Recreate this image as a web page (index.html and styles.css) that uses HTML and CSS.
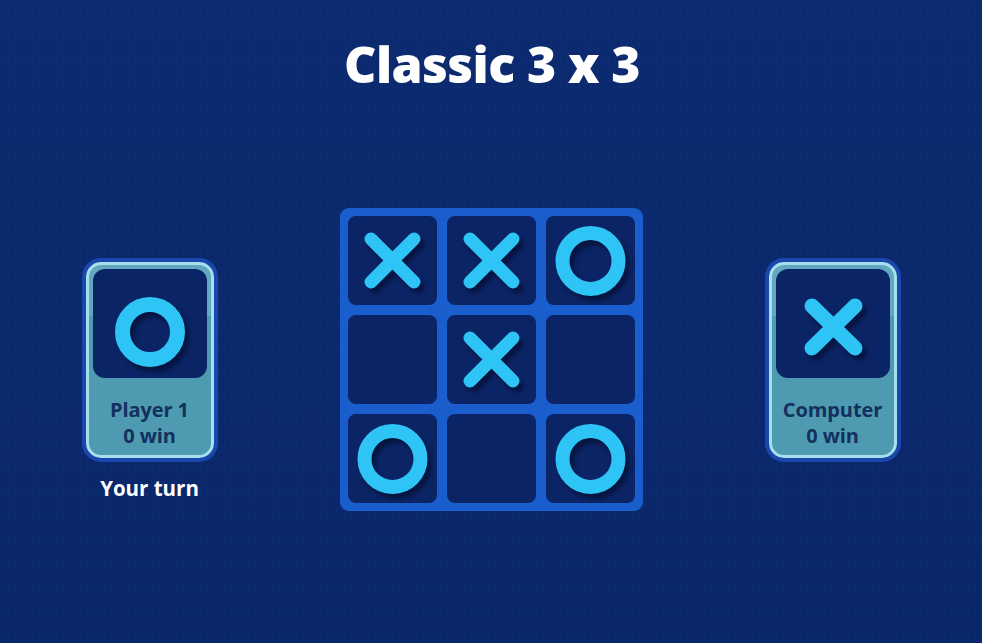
FILE: index.html
```html
<!DOCTYPE html>
<html lang="en">
<head>
<meta charset="utf-8">
<title>Classic 3 x 3</title>
<link rel="stylesheet" href="styles.css">
</head>
<body>
<main class="screen">
  <h1 class="title">Classic 3 x 3</h1>
  <div class="arena">
    <div class="player">
      <div class="card">
        <div class="token">
          <svg class="mark" width="115" height="109" viewBox="0 0 115 109"><circle cx="57" cy="63" r="27.5" fill="none" stroke="#2ec5f6" stroke-width="15"/></svg>
        </div>
        <div class="name">Player 1<br>0 win</div>
      </div>
      <div class="turn">Your turn</div>
    </div>

    <div class="board">
      <div class="cell"><svg class="mark" width="89" height="89" viewBox="0 0 89 89"><path d="M23 23 L66 66 M66 23 L23 66" stroke="#2ec5f6" stroke-width="13" stroke-linecap="round" fill="none"/></svg></div>
      <div class="cell"><svg class="mark" width="89" height="89" viewBox="0 0 89 89"><path d="M23 23 L66 66 M66 23 L23 66" stroke="#2ec5f6" stroke-width="13" stroke-linecap="round" fill="none"/></svg></div>
      <div class="cell"><svg class="mark" width="89" height="89" viewBox="0 0 89 89"><circle cx="44.5" cy="45" r="28" fill="none" stroke="#2ec5f6" stroke-width="14"/></svg></div>
      <div class="cell"></div>
      <div class="cell"><svg class="mark" width="89" height="89" viewBox="0 0 89 89"><path d="M23 23 L66 66 M66 23 L23 66" stroke="#2ec5f6" stroke-width="13" stroke-linecap="round" fill="none"/></svg></div>
      <div class="cell"></div>
      <div class="cell"><svg class="mark" width="89" height="89" viewBox="0 0 89 89"><circle cx="44.5" cy="45" r="28" fill="none" stroke="#2ec5f6" stroke-width="14"/></svg></div>
      <div class="cell"></div>
      <div class="cell"><svg class="mark" width="89" height="89" viewBox="0 0 89 89"><circle cx="44.5" cy="45" r="28" fill="none" stroke="#2ec5f6" stroke-width="14"/></svg></div>
    </div>

    <div class="player">
      <div class="card">
        <div class="token">
          <svg class="mark" width="115" height="109" viewBox="0 0 115 109"><path d="M36 37 L79 79 M79 37 L36 79" stroke="#2ec5f6" stroke-width="15" stroke-linecap="round" fill="none"/></svg>
        </div>
        <div class="name">Computer<br>0 win</div>
      </div>
    </div>
  </div>
</main>
</body>
</html>
```

FILE: styles.css
```css
* { box-sizing: border-box; }

html, body {
  margin: 0;
  padding: 0;
}

body {
  width: 982px;
  height: 643px;
  overflow: hidden;
  font-family: "Open Sans", "Noto Sans", sans-serif;
  background-color: #0b286c;
}

.screen {
  width: 982px;
  height: 643px;
  padding-top: 34px;
  background-color: #0b286c;
  background-image:
    radial-gradient(circle, rgba(40, 80, 170, 0.08) 1px, transparent 1.5px),
    linear-gradient(180deg, #0c2a6f 0%, #0a276a 100%);
  background-size: 6px 6px, 100% 100%;
}

.title {
  margin: 0;
  text-align: center;
  color: #ffffff;
  font-size: 50px;
  line-height: 60px;
  font-weight: 800;
  letter-spacing: -0.6px;
  padding-left: 2px;
}

.arena {
  margin-top: 114px;
  display: flex;
  justify-content: center;
  align-items: flex-start;
  gap: 122px;
}

.player {
  width: 136px;
  margin-top: 54px;
  display: flex;
  flex-direction: column;
  align-items: center;
}

.card {
  width: 128px;
  height: 196px;
  border: 3px solid #a6dfee;
  border-radius: 15px;
  box-shadow: 0 0 0 4px #1a47ad;
  padding: 4px 4px 0;
  background: linear-gradient(180deg, #62a9bf 0%, #62a9bf 27%, #4e9ab0 27%, #4e9ab0 100%);
  display: flex;
  flex-direction: column;
  align-items: center;
}

.token {
  width: 114px;
  height: 109px;
  border-radius: 12px;
  background: #0b2465;
  flex: none;
  overflow: hidden;
}

.name {
  margin-top: 19px;
  text-align: center;
  color: #13305f;
  font-weight: 700;
  font-size: 20px;
  line-height: 26px;
  letter-spacing: -0.1px;
}

.turn {
  margin-top: 18px;
  color: #ffffff;
  font-weight: 700;
  font-size: 20.5px;
  line-height: 24px;
  letter-spacing: 0;
}

.board {
  margin-top: 0;
  padding: 8px;
  border-radius: 9px;
  background: #1a5dcd;
  display: grid;
  grid-template-columns: repeat(3, 89px);
  grid-template-rows: repeat(3, 89px);
  gap: 10px;
}

.cell {
  width: 89px;
  height: 89px;
  border-radius: 8px;
  background: #0b2465;
}

.mark {
  display: block;
  filter: drop-shadow(4px 5px 2px rgba(3, 12, 45, 0.65));
}
```
